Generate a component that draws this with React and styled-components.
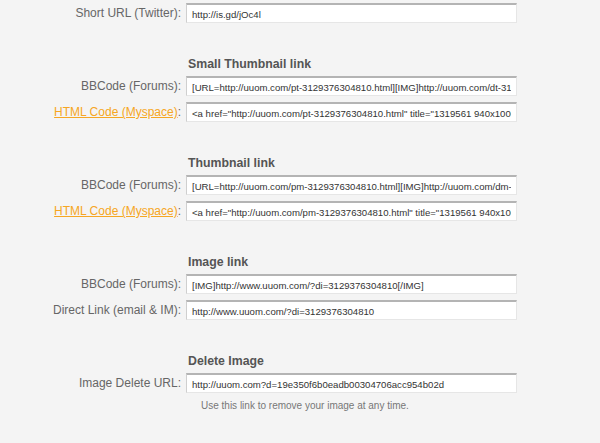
import React from "react";
import styled, { createGlobalStyle } from "styled-components";

const GlobalStyle = createGlobalStyle`
  html, body {
    margin: 0;
    padding: 0;
    background: #f4f4f4;
    font-family: "Liberation Sans", Arial, sans-serif;
  }
`;

const Page = styled.div`
  width: 600px;
  height: 443px;
  padding-top: 3px;
  box-sizing: border-box;
  background: #f4f4f4;
  overflow: hidden;
`;

const Section = styled.div`
  display: grid;
  grid-template-columns: 181px 331px;
  column-gap: 5px;
  row-gap: 6px;
  margin-top: ${(props) => (props.first ? "0" : "33px")};
`;

const Heading = styled.div`
  grid-column: 2;
  font-size: 12.3px;
  line-height: 16px;
  font-weight: bold;
  color: #555;
  padding-left: 2px;
  margin-bottom: -2px;
`;

const Label = styled.label`
  grid-column: 1;
  display: flex;
  align-items: center;
  justify-content: flex-end;
  font-size: 12px;
  color: #666;
  white-space: nowrap;
`;

const LabelLink = styled.a`
  color: #f6a623;
  text-decoration: underline;
`;

const Field = styled.input`
  grid-column: 2;
  width: 331px;
  height: 20px;
  box-sizing: border-box;
  margin: 0;
  padding: 1px 5px 0;
  background: #fff;
  border: 1px solid #e6e6e6;
  border-top: 2px solid #b4b4b4;
  border-left-color: #cfcfcf;
  font-family: "Liberation Sans", Arial, sans-serif;
  font-size: 9.6px;
  color: #333;
  outline: none;
`;

const Note = styled.div`
  grid-column: 2;
  font-size: 10px;
  color: #777;
  padding-left: 15px;
  margin-top: 1px;
`;

const Row = ({ label, link, value }) => (
  <>
    <Label>
      {link ? <LabelLink href="#">{label}</LabelLink> : label}:
    </Label>
    <Field readOnly value={value} />
  </>
);

const App = () => (
  <Page>
    <GlobalStyle />
    <Section first>
      <Row label="Short URL (Twitter)" value="http://is.gd/jOc4l" />
    </Section>
    <Section>
      <Heading>Small Thumbnail link</Heading>
      <Row
        label="BBCode (Forums)"
        value="[URL=http://uuom.com/pt-3129376304810.html][IMG]http://uuom.com/dt-3129376304810.jpg[/IMG][/URL]"
      />
      <Row
        link
        label="HTML Code (Myspace)"
        value={'<a href="http://uuom.com/pt-3129376304810.html" title="1319561 940x1000"><img src="http://uuom.com/dt-3129376304810.jpg" /></a>'}
      />
    </Section>
    <Section>
      <Heading>Thumbnail link</Heading>
      <Row
        label="BBCode (Forums)"
        value="[URL=http://uuom.com/pm-3129376304810.html][IMG]http://uuom.com/dm-3129376304810.jpg[/IMG][/URL]"
      />
      <Row
        link
        label="HTML Code (Myspace)"
        value={'<a href="http://uuom.com/pm-3129376304810.html" title="1319561 940x1000"><img src="http://uuom.com/dm-3129376304810.jpg" /></a>'}
      />
    </Section>
    <Section>
      <Heading>Image link</Heading>
      <Row
        label="BBCode (Forums)"
        value="[IMG]http://www.uuom.com/?di=3129376304810[/IMG]"
      />
      <Row
        label="Direct Link (email & IM)"
        value="http://www.uuom.com/?di=3129376304810"
      />
    </Section>
    <Section>
      <Heading>Delete Image</Heading>
      <Row
        label="Image Delete URL"
        value="http://uuom.com?d=19e350f6b0eadb00304706acc954b02d"
      />
      <Note>Use this link to remove your image at any time.</Note>
    </Section>
  </Page>
);

export default App;
